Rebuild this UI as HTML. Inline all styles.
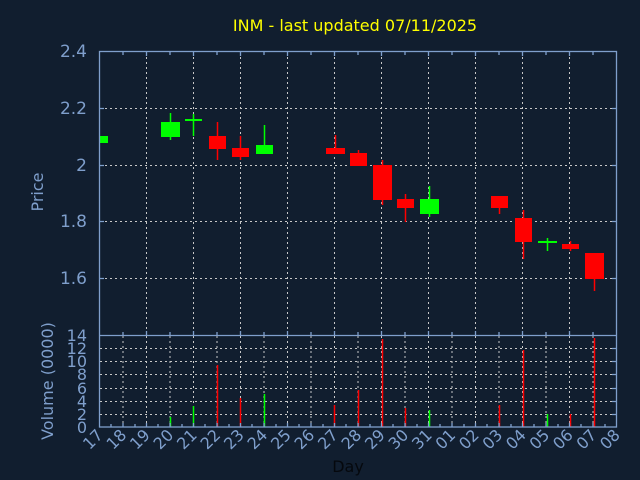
<!DOCTYPE html><html><head><style>body{margin:0;background:#111e2f;}svg{display:block}</style></head><body>
<svg width="640" height="480" xmlns="http://www.w3.org/2000/svg" font-family="'DejaVu Sans','Liberation Sans',sans-serif">
<rect width="640" height="480" fill="#111e2f"/>
<text x="355" y="31" fill="#ffff00" font-size="16" text-anchor="middle">INM - last updated 07/11/2025</text>
<g stroke="#c8c8c8" stroke-dasharray="2,3" stroke-width="1">
<line x1="100" x2="617" y1="108.5" y2="108.5"/><line x1="100" x2="617" y1="165.5" y2="165.5"/><line x1="100" x2="617" y1="221.5" y2="221.5"/><line x1="100" x2="617" y1="278.5" y2="278.5"/>
<line x1="146.5" x2="146.5" y1="52" y2="335"/><line x1="193.5" x2="193.5" y1="52" y2="335"/><line x1="240.5" x2="240.5" y1="52" y2="335"/><line x1="287.5" x2="287.5" y1="52" y2="335"/><line x1="334.5" x2="334.5" y1="52" y2="335"/><line x1="381.5" x2="381.5" y1="52" y2="335"/><line x1="428.5" x2="428.5" y1="52" y2="335"/><line x1="475.5" x2="475.5" y1="52" y2="335"/><line x1="522.5" x2="522.5" y1="52" y2="335"/><line x1="569.5" x2="569.5" y1="52" y2="335"/>
<line x1="100" x2="617" y1="414.5" y2="414.5"/><line x1="100" x2="617" y1="401.5" y2="401.5"/><line x1="100" x2="617" y1="388.5" y2="388.5"/><line x1="100" x2="617" y1="374.5" y2="374.5"/><line x1="100" x2="617" y1="361.5" y2="361.5"/><line x1="100" x2="617" y1="348.5" y2="348.5"/>
<path d="M123 336V427M146.5 336V427M170 336V427M193.5 336V427M217 336V427M240.5 336V427M264 336V427M287.5 336V427M311 336V427M334.5 336V427M358 336V427M381.5 336V427M405 336V427M428.5 336V427M452 336V427M475.5 336V427M499 336V427M522.5 336V427M546 336V427M569.5 336V427M593 336V427"/>
</g>
<!-- candles -->
<g>
<rect x="99" y="136" width="9" height="7" fill="#00ff00"/>
<line x1="170.5" x2="170.5" y1="113" y2="140" stroke="#00ff00" stroke-width="1.5"/><rect x="161" y="122" width="19" height="15" fill="#00ff00"/>
<line x1="193.5" x2="193.5" y1="114" y2="136" stroke="#00ff00" stroke-width="1.5"/><rect x="185" y="119" width="17" height="2" fill="#00ff00"/>
<line x1="217.5" x2="217.5" y1="122" y2="160" stroke="#ff0000" stroke-width="1.5"/><rect x="209" y="136" width="17" height="13" fill="#ff0000"/>
<line x1="240.5" x2="240.5" y1="136" y2="160" stroke="#ff0000" stroke-width="1.5"/><rect x="232" y="148" width="17" height="9" fill="#ff0000"/>
<line x1="264.5" x2="264.5" y1="125" y2="154" stroke="#00ff00" stroke-width="1.5"/><rect x="256" y="145" width="17" height="9" fill="#00ff00"/>
<line x1="335.5" x2="335.5" y1="135" y2="154" stroke="#ff0000" stroke-width="1.5"/><rect x="326" y="148" width="19" height="6" fill="#ff0000"/>
<line x1="358.5" x2="358.5" y1="150" y2="166" stroke="#ff0000" stroke-width="1.5"/><rect x="350" y="153" width="17" height="13" fill="#ff0000"/>
<line x1="382.5" x2="382.5" y1="160" y2="205" stroke="#ff0000" stroke-width="1.5"/><rect x="373" y="165" width="19" height="35" fill="#ff0000"/>
<line x1="405.5" x2="405.5" y1="194" y2="222" stroke="#ff0000" stroke-width="1.5"/><rect x="397" y="199" width="17" height="9" fill="#ff0000"/>
<line x1="429.5" x2="429.5" y1="186" y2="217" stroke="#00ff00" stroke-width="1.5"/><rect x="420" y="199" width="19" height="15" fill="#00ff00"/>
<line x1="499.5" x2="499.5" y1="196" y2="214" stroke="#ff0000" stroke-width="1.5"/><rect x="491" y="196" width="17" height="12" fill="#ff0000"/>
<line x1="523.5" x2="523.5" y1="210" y2="259" stroke="#ff0000" stroke-width="1.5"/><rect x="515" y="218" width="17" height="24" fill="#ff0000"/>
<line x1="547.5" x2="547.5" y1="238" y2="251" stroke="#00ff00" stroke-width="1.5"/><rect x="538" y="241" width="19" height="2" fill="#00ff00"/>
<line x1="570.5" x2="570.5" y1="241" y2="251" stroke="#ff0000" stroke-width="1.5"/><rect x="562" y="244" width="17" height="5" fill="#ff0000"/>
<line x1="594.5" x2="594.5" y1="253" y2="291" stroke="#ff0000" stroke-width="1.5"/><rect x="585" y="253" width="19" height="26" fill="#ff0000"/>
</g>
<!-- volume -->
<g stroke-width="1.5">
<line x1="170.5" x2="170.5" y1="417" y2="427" stroke="#00ff00"/>
<line x1="193.5" x2="193.5" y1="406" y2="427" stroke="#00ff00"/>
<line x1="217.5" x2="217.5" y1="365" y2="427" stroke="#ff0000"/>
<line x1="240.5" x2="240.5" y1="398" y2="427" stroke="#ff0000"/>
<line x1="264.5" x2="264.5" y1="394" y2="427" stroke="#00ff00"/>
<line x1="334.5" x2="334.5" y1="405" y2="427" stroke="#ff0000"/>
<line x1="358.5" x2="358.5" y1="390" y2="427" stroke="#ff0000"/>
<line x1="382.5" x2="382.5" y1="339" y2="427" stroke="#ff0000"/>
<line x1="405.5" x2="405.5" y1="408" y2="427" stroke="#ff0000"/>
<line x1="429.5" x2="429.5" y1="410" y2="427" stroke="#00ff00"/>
<line x1="499.5" x2="499.5" y1="405" y2="427" stroke="#ff0000"/>
<line x1="523.5" x2="523.5" y1="350" y2="427" stroke="#ff0000"/>
<line x1="547.5" x2="547.5" y1="414" y2="427" stroke="#00ff00"/>
<line x1="570.5" x2="570.5" y1="414" y2="427" stroke="#ff0000"/>
<line x1="594.5" x2="594.5" y1="338" y2="427" stroke="#ff0000"/>
</g>
<!-- axes -->
<g stroke="#7f9fcc" fill="none" stroke-width="1.3">
<rect x="99.5" y="51.5" width="517" height="375.5"/>
<line x1="99.5" x2="616.5" y1="335.5" y2="335.5"/>
<path d="M99 108.5h5M99 165.5h5M99 221.5h5M99 278.5h5M612 108.5h5M612 165.5h5M612 221.5h5M612 278.5h5M612 414.5h5M612 401.5h5M612 388.5h5M612 374.5h5M612 361.5h5M612 348.5h5"/>
<path d="M123 52v3M146.5 52v4M170 52v3M193.5 52v4M217 52v3M240.5 52v4M264 52v3M287.5 52v4M311 52v3M334.5 52v4M358 52v3M381.5 52v4M405 52v3M428.5 52v4M452 52v3M475.5 52v4M499 52v3M522.5 52v4M546 52v3M569.5 52v4M593 52v3"/>
<path d="M123 335v-3M146.5 335v-4M170 335v-3M193.5 335v-4M217 335v-3M240.5 335v-4M264 335v-3M287.5 335v-4M311 335v-3M334.5 335v-4M358 335v-3M381.5 335v-4M405 335v-3M428.5 335v-4M452 335v-3M475.5 335v-4M499 335v-3M522.5 335v-4M546 335v-3M569.5 335v-4M593 335v-3"/>
<path d="M111 427v-3M123 427v-4M135 427v-3M146.5 427v-4M158 427v-3M170 427v-4M182 427v-3M193.5 427v-4M205 427v-3M217 427v-4M229 427v-3M240.5 427v-4M252 427v-3M264 427v-4M276 427v-3M287.5 427v-4M299 427v-3M311 427v-4M323 427v-3M334.5 427v-4M346 427v-3M358 427v-4M370 427v-3M381.5 427v-4M393 427v-3M405 427v-4M417 427v-3M428.5 427v-4M440 427v-3M452 427v-4M464 427v-3M475.5 427v-4M487 427v-3M499 427v-4M511 427v-3M522.5 427v-4M534 427v-3M546 427v-4M558 427v-3M569.5 427v-4M581 427v-3M593 427v-4M605 427v-3"/>
</g>
<g fill="#7f9fcc" font-size="17" text-anchor="end">
<text x="87" y="57">2.4</text><text x="87" y="114">2.2</text><text x="87" y="171">2</text><text x="87" y="227">1.8</text><text x="87" y="284">1.6</text>
</g>
<g fill="#7f9fcc" font-size="16" text-anchor="end">
<text x="87" y="341">14</text><text x="87" y="354">12</text><text x="87" y="367">10</text><text x="87" y="380">8</text><text x="87" y="394">6</text><text x="87" y="407">4</text><text x="87" y="420">2</text><text x="87" y="433">0</text>
</g>
<text transform="translate(43,192) rotate(-90)" fill="#7f9fcc" font-size="16" text-anchor="middle">Price</text>
<text transform="translate(53,381) rotate(-90)" fill="#7f9fcc" font-size="16" text-anchor="middle">Volume (0000)</text>
<g fill="#7f9fcc" font-size="16" text-anchor="end">
<text transform="translate(104,436) rotate(-45)">17</text><text transform="translate(127.5,436) rotate(-45)">18</text><text transform="translate(151,436) rotate(-45)">19</text><text transform="translate(174.5,436) rotate(-45)">20</text><text transform="translate(198,436) rotate(-45)">21</text><text transform="translate(221.5,436) rotate(-45)">22</text><text transform="translate(245,436) rotate(-45)">23</text><text transform="translate(268.5,436) rotate(-45)">24</text><text transform="translate(292,436) rotate(-45)">25</text><text transform="translate(315.5,436) rotate(-45)">26</text><text transform="translate(339,436) rotate(-45)">27</text><text transform="translate(362.5,436) rotate(-45)">28</text><text transform="translate(386,436) rotate(-45)">29</text><text transform="translate(409.5,436) rotate(-45)">30</text><text transform="translate(433,436) rotate(-45)">31</text><text transform="translate(456.5,436) rotate(-45)">01</text><text transform="translate(480,436) rotate(-45)">02</text><text transform="translate(503.5,436) rotate(-45)">03</text><text transform="translate(527,436) rotate(-45)">04</text><text transform="translate(550.5,436) rotate(-45)">05</text><text transform="translate(574,436) rotate(-45)">06</text><text transform="translate(597.5,436) rotate(-45)">07</text><text transform="translate(621,436) rotate(-45)">08</text>
</g>
<text x="348" y="472" fill="#05080d" font-size="16" text-anchor="middle">Day</text>
</svg>
</body></html>
